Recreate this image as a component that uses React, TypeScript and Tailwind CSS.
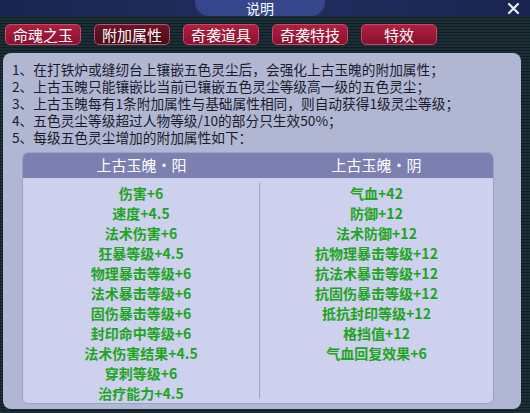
import React from 'react';

const tabs = ['命魂之玉', '附加属性', '奇袭道具', '奇袭特技', '特效'];

const notes = [
  '1、在打铁炉或缝纫台上镶嵌五色灵尘后，会强化上古玉魄的附加属性；',
  '2、上古玉魄只能镶嵌比当前已镶嵌五色灵尘等级高一级的五色灵尘；',
  '3、上古玉魄每有1条附加属性与基础属性相同，则自动获得1级灵尘等级；',
  '4、五色灵尘等级超过人物等级/10的部分只生效50%；',
  '5、每级五色灵尘增加的附加属性如下：',
];

const yang = [
  '伤害+6',
  '速度+4.5',
  '法术伤害+6',
  '狂暴等级+4.5',
  '物理暴击等级+6',
  '法术暴击等级+6',
  '固伤暴击等级+6',
  '封印命中等级+6',
  '法术伤害结果+4.5',
  '穿刺等级+6',
  '治疗能力+4.5',
];

const yin = [
  '气血+42',
  '防御+12',
  '法术防御+12',
  '抗物理暴击等级+12',
  '抗法术暴击等级+12',
  '抗固伤暴击等级+12',
  '抵抗封印等级+12',
  '格挡值+12',
  '气血回复效果+6',
];

const Column: React.FC<{ items: string[]; className?: string }> = ({ items, className }) => (
  <div className={`flex flex-col items-center ${className ?? ''}`}>
    {items.map((t) => (
      <div key={t} className="h-[20px] leading-[20px] text-[14px] font-semibold text-[#1ea41e]">
        {t}
      </div>
    ))}
  </div>
);

export default function App() {
  return (
    <div className="w-[530px] h-[413px] overflow-hidden flex flex-col font-['Noto_Sans_CJK_SC',sans-serif] bg-[repeating-linear-gradient(to_bottom,#1c2d35_0px,#1c2d35_2px,#0f1e24_2px,#0f1e24_3px)]">
      {/* title bar */}
      <div className="h-[16px] flex bg-gradient-to-r from-[#1a2450] via-[#222e62] to-[#1a2450]">
        <div className="flex-1" />
        <div className="w-[130px] h-[16px] rounded-b-[14px] bg-[#35468a] text-center text-white text-[14px] leading-[16px]">
          说明
        </div>
        <div className="flex-1 flex justify-end items-center pr-[10px]">
          <svg width="13" height="13" viewBox="0 0 13 13">
            <path d="M2 2L11 11M11 2L2 11" stroke="#e8ecf8" strokeWidth="2.2" strokeLinecap="round" />
          </svg>
        </div>
      </div>

      {/* tabs */}
      <div className="flex gap-[13px] pl-[5px] mt-[8px] h-[21px]">
        {tabs.map((t, i) => (
          <div
            key={t}
            className={`w-[76px] h-[21px] rounded-[5px] flex items-center justify-center text-[15px] leading-none text-white border ${
              i === 1
                ? 'bg-gradient-to-b from-[#6e1426] to-[#4c0c18] border-[#b05a6c]'
                : 'bg-gradient-to-b from-[#b0203f] to-[#8a1030] border-[#c84a68]'
            }`}
          >
            {t}
          </div>
        ))}
      </div>

      {/* content panel */}
      <div className="mt-[8px] ml-[3px] w-[518px] h-[356px] rounded-[8px] bg-[#b1b7d3] pt-[8px]">
        <div className="pl-[9px] text-[13.7px] leading-[17px] text-[#1a1c2c]">
          {notes.map((n) => (
            <div key={n} className="h-[17px]">{n}</div>
          ))}
        </div>

        <div className="mt-[6px] ml-[19px] w-[472px] h-[252px] rounded-[6px] bg-[#cdd1ed] border border-[#9da1c7] overflow-hidden">
          <div className="h-[25px] flex bg-[#7b80b0] text-white text-[15px]">
            <div className="w-[237px] flex items-center justify-center">上古玉魄・阳</div>
            <div className="flex-1 flex items-center justify-center">上古玉魄・阴</div>
          </div>
          <div className="flex pt-[5px]">
            <Column items={yang} className="w-[236px]" />
            <div className="w-px h-[215px] bg-[#9ea2c8]" />
            <Column items={yin} className="flex-1" />
          </div>
        </div>
      </div>
    </div>
  );
}
